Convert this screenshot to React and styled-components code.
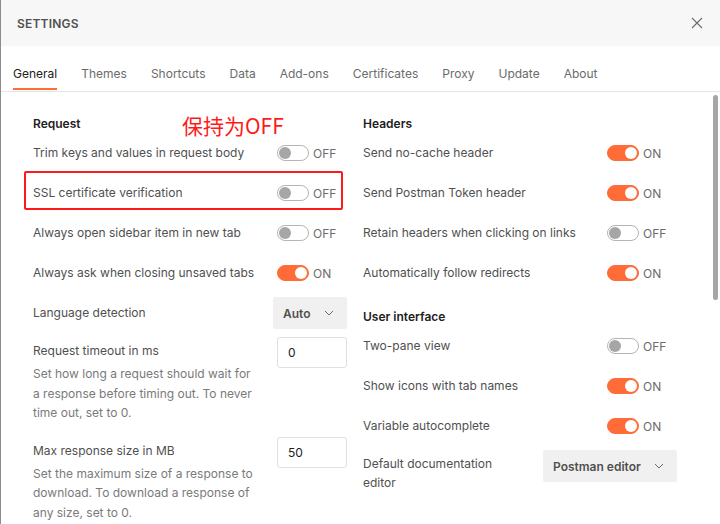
import React from 'react';
import styled, { createGlobalStyle } from 'styled-components';

const GlobalStyle = createGlobalStyle`
	html, body {
		margin: 0;
		padding: 0;
		background: #ffffff;
	}
	body {
		font-family: Inter, "Noto Sans", sans-serif;
		font-size: 12px;
		color: #505050;
	}
`;

const Modal = styled.div`
	position: relative;
	width: 720px;
	height: 524px;
	box-sizing: border-box;
	border-left: 1px solid #8c8c8c;
	overflow: hidden;
	background: #fff;
`;

const Header = styled.div`
	height: 46px;
	background: #f7f7f7;
	display: flex;
	align-items: center;
	justify-content: space-between;
	padding: 0 17px 0 16px;
`;

const Title = styled.div`
	font-size: 12px;
	font-weight: 600;
	color: #505050;
	letter-spacing: 0.2px;
`;

const CloseButton = styled.button`
	border: 0;
	background: transparent;
	padding: 0;
	width: 12px;
	height: 12px;
	display: flex;
	cursor: pointer;
`;

const Tabs = styled.div`
	display: flex;
	gap: 24px;
	height: 45px;
	padding-left: 12px;
	border-bottom: 1px solid #e6e6e6;
`;

const Tab = styled.div`
	display: flex;
	align-items: center;
	padding-top: 9px;
	position: relative;
	font-size: 12px;
	color: ${p => (p.active ? '#212121' : '#6b6b6b')};
	&::after {
		content: '';
		display: ${p => (p.active ? 'block' : 'none')};
		position: absolute;
		left: 0;
		right: 0;
		bottom: 1px;
		height: 2px;
		background: #ff6c37;
	}
`;

const Body = styled.div`
	display: grid;
	grid-template-columns: 314px 314px;
	column-gap: 16px;
	padding: 22px 0 0 32px;
`;

const Column = styled.div`
	position: relative;
	display: flex;
	flex-direction: column;
`;

const SectionTitle = styled.div`
	font-size: 12px;
	font-weight: 600;
	color: #212121;
	line-height: 20px;
	margin-top: ${p => p.gap || 0}px;
	margin-bottom: -1px;
	display: flex;
	gap: 10px;
`;

const ResetLink = styled.span`
	font-weight: 400;
	color: #0265d2;
`;

const Note = styled.div`
	position: absolute;
	left: 149px;
	top: -1px;
	line-height: 24px;
	font-family: "Noto Sans CJK SC", "Noto Sans", sans-serif;
	font-size: 21px;
	color: #ff1a1a;
`;

const Row = styled.div`
	position: relative;
	display: flex;
	align-items: center;
	justify-content: space-between;
	height: 40px;
	&::before {
		content: '';
		display: ${p => (p.marked ? 'block' : 'none')};
		position: absolute;
		left: -9px;
		right: 4px;
		top: -2px;
		bottom: 3px;
		border: 2px solid #ff1a1a;
		border-radius: 2px;
	}
`;

const Label = styled.div`
	color: #505050;
	line-height: 20px;
`;

const SwitchWrap = styled.div`
	width: 70px;
	display: flex;
	align-items: center;
	gap: 4px;
	font-size: 12px;
	color: #6b6b6b;
`;

const Track = styled.div`
	box-sizing: border-box;
	width: 32px;
	height: 16px;
	border-radius: 8px;
	background: ${p => (p.on ? '#ff6c37' : '#ffffff')};
	border: 1px solid ${p => (p.on ? '#ff6c37' : '#b4b4b4')};
	display: flex;
	align-items: center;
	justify-content: ${p => (p.on ? 'flex-end' : 'flex-start')};
	padding: 0 1px;
`;

const Knob = styled.div`
	width: 12px;
	height: 12px;
	border-radius: 50%;
	background: ${p => (p.on ? '#ffffff' : '#a6a6a6')};
`;

const Select = styled.div`
	box-sizing: border-box;
	width: ${p => p.width}px;
	height: 32px;
	background: #f0f0f0;
	border-radius: 2px;
	display: flex;
	align-items: center;
	justify-content: space-between;
	padding: 0 13px 0 10px;
	font-size: 12px;
	font-weight: 600;
	color: #505050;
	flex-shrink: 0;
`;

const FieldBlock = styled.div`
	display: flex;
	justify-content: space-between;
	align-items: flex-start;
	padding: 4px 0 ${p => p.bottom ?? 10}px;
`;

const FieldText = styled.div`
	width: 222px;
`;

const FieldLabel = styled.div`
	line-height: 24px;
	color: #505050;
	margin: 2px 0 1px;
`;

const Desc = styled.div`
	line-height: 19.5px;
	color: #7a7a7a;
`;

const Input = styled.div`
	box-sizing: border-box;
	width: 70px;
	height: 31px;
	border: 1px solid #e0e0e0;
	border-radius: 3px;
	display: flex;
	align-items: center;
	padding-left: 10px;
	color: #212121;
`;

const EditorRow = styled.div`
	display: flex;
	justify-content: space-between;
	align-items: flex-start;
	padding-top: 4px;
	height: 46px;
	gap: 20px;
`;

const EditorLabel = styled.div`
	max-width: 145px;
	padding-top: 4px;
	line-height: 19px;
	color: #505050;
`;

const ScrollThumb = styled.div`
	position: absolute;
	right: 2px;
	top: 95px;
	width: 5px;
	height: 205px;
	border-radius: 3px;
	background: #a6a6a6;
`;

const Chevron = () => (
	<svg width="10" height="6" viewBox="0 0 10 6" fill="none">
		<path d="M1 1l4 4 4-4" stroke="#6b6b6b" strokeWidth="1" />
	</svg>
);

const Switch = ({ on }) => (
	<SwitchWrap>
		<Track on={on ? 1 : 0}>
			<Knob on={on ? 1 : 0} />
		</Track>
		{on ? 'ON' : 'OFF'}
	</SwitchWrap>
);

const tabs = ['General', 'Themes', 'Shortcuts', 'Data', 'Add-ons', 'Certificates', 'Proxy', 'Update', 'About'];

const requestRows = [
	{ label: 'Trim keys and values in request body', on: false },
	{ label: 'SSL certificate verification', on: false, marked: true },
	{ label: 'Always open sidebar item in new tab', on: false },
	{ label: 'Always ask when closing unsaved tabs', on: true },
];

const headerRows = [
	{ label: 'Send no-cache header', on: true },
	{ label: 'Send Postman Token header', on: true },
	{ label: 'Retain headers when clicking on links', on: false },
	{ label: 'Automatically follow redirects', on: true },
];

const uiRows = [
	{ label: 'Two-pane view', on: false },
	{ label: 'Show icons with tab names', on: true },
	{ label: 'Variable autocomplete', on: true },
];

export default function App() {
	return (
		<Modal>
			<GlobalStyle />
			<Header>
				<Title>SETTINGS</Title>
				<CloseButton>
					<svg width="12" height="12" viewBox="0 0 12 12">
						<path d="M1 1l10 10M11 1L1 11" stroke="#6b6b6b" strokeWidth="1.1" />
					</svg>
				</CloseButton>
			</Header>
			<Tabs>
				{tabs.map((t, i) => (
					<Tab key={t} active={i === 0 ? 1 : 0}>{t}</Tab>
				))}
			</Tabs>
			<Body>
				<Column>
					<SectionTitle>Request</SectionTitle>
					<Note>保持为OFF</Note>
					{requestRows.map(r => (
						<Row key={r.label} marked={r.marked ? 1 : 0}>
							<Label>{r.label}</Label>
							<Switch on={r.on} />
						</Row>
					))}
					<Row>
						<Label>Language detection</Label>
						<Select width={74}>Auto<Chevron /></Select>
					</Row>
					<FieldBlock>
						<FieldText>
							<FieldLabel>Request timeout in ms</FieldLabel>
							<Desc>Set how long a request should wait for a response before timing out. To never time out, set to 0.</Desc>
						</FieldText>
						<Input>0</Input>
					</FieldBlock>
					<FieldBlock>
						<FieldText>
							<FieldLabel>Max response size in MB</FieldLabel>
							<Desc>Set the maximum size of a response to download. To download a response of any size, set to 0.</Desc>
						</FieldText>
						<Input>50</Input>
					</FieldBlock>
				</Column>
				<Column>
					<SectionTitle>Headers</SectionTitle>
					{headerRows.map(r => (
						<Row key={r.label}>
							<Label>{r.label}</Label>
							<Switch on={r.on} />
						</Row>
					))}
					<SectionTitle gap={14}>User interface</SectionTitle>
					{uiRows.map(r => (
						<Row key={r.label}>
							<Label>{r.label}</Label>
							<Switch on={r.on} />
						</Row>
					))}
					<EditorRow>
						<EditorLabel>Default documentation editor</EditorLabel>
						<Select width={134}>Postman editor<Chevron /></Select>
					</EditorRow>
					<SectionTitle gap={26}>
						Editor settings <ResetLink>Reset</ResetLink>
					</SectionTitle>
				</Column>
			</Body>
			<ScrollThumb />
		</Modal>
	);
}
